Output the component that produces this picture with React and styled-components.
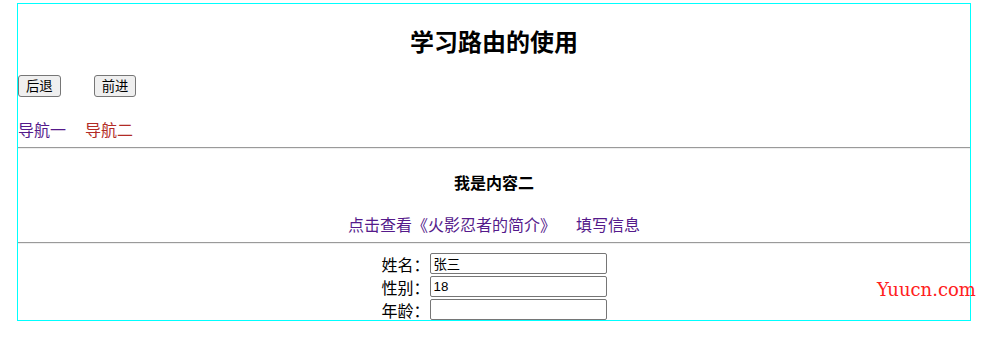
import React from "react";
import styled, { createGlobalStyle } from "styled-components";

const Global = createGlobalStyle`
  html, body { margin: 0; padding: 0; background: #fff; }
  body { font-family: "Noto Sans CJK SC", "Liberation Sans", sans-serif; color: #000; }
`;

const Page = styled.div`
  position: relative;
  width: 988px;
  height: 347px;
  padding: 3px 0 0 17px;
  box-sizing: border-box;
`;

const Frame = styled.div`
  width: 954px;
  height: 318px;
  box-sizing: border-box;
  border: 1px solid #00ffff;
  display: flex;
  flex-direction: column;
`;

const Title = styled.h2`
  margin: 25px 0 0;
  font-size: 24px;
  line-height: 24px;
  font-weight: 700;
  text-align: center;
`;

const ButtonRow = styled.div`
  display: flex;
  gap: 33px;
  margin-top: 22px;
`;

const Btn = styled.button`
  height: 22px;
  padding: 0 7px;
  font-family: "Noto Sans CJK SC", sans-serif;
  font-size: 13.33px;
  line-height: 18px;
  color: #000;
  background: #efefef;
  border: 1px solid #767676;
  border-radius: 3px;
`;

const NavRow = styled.div`
  display: flex;
  gap: 19px;
  margin-top: 24px;
`;

const Link = styled.a`
  font-size: 16px;
  line-height: 16px;
  color: ${(p) => (p.$active ? "#b22b26" : "#551a8b")};
  text-decoration: none;
  cursor: pointer;
`;

const Rule = styled.hr`
  width: 100%;
  margin: ${(p) => p.$top}px 0 0;
  height: 0;
  border: 0;
  border-top: 1px solid #9a9a9a;
  border-bottom: 1px solid #eeeeee;
`;

const SubTitle = styled.h4`
  margin: 25px 0 0;
  font-size: 16px;
  line-height: 16px;
  font-weight: 700;
  text-align: center;
`;

const LinkRow = styled.div`
  display: flex;
  justify-content: center;
  gap: 20px;
  margin-top: 26px;
`;

const Form = styled.div`
  margin-top: 8px;
  display: flex;
  flex-direction: column;
`;

const Row = styled.div`
  height: 23px;
  display: flex;
  justify-content: center;
  align-items: center;
`;

const Label = styled.label`
  width: 48px;
  font-size: 16px;
  line-height: 16px;
`;

const Input = styled.input`
  width: 177px;
  height: 21px;
  box-sizing: border-box;
  padding: 1px 3px;
  border: 1px solid #767676;
  border-radius: 2px;
  font-family: "Liberation Sans", "Noto Sans CJK SC", sans-serif;
  font-size: 13.33px;
  color: #000;
  outline: none;
`;

const Watermark = styled.div`
  position: absolute;
  left: 877px;
  top: 279px;
  font-family: "DejaVu Serif", serif;
  font-size: 18px;
  line-height: 22px;
  color: #ff2020;
`;

export default function App() {
  return (
    <Page>
      <Global />
      <Frame>
        <Title>学习路由的使用</Title>
        <ButtonRow>
          <Btn>后退</Btn>
          <Btn>前进</Btn>
        </ButtonRow>
        <NavRow>
          <Link>导航一</Link>
          <Link $active>导航二</Link>
        </NavRow>
        <Rule $top={10} />
        <SubTitle>我是内容二</SubTitle>
        <LinkRow>
          <Link>点击查看《火影忍者的简介》</Link>
          <Link>填写信息</Link>
        </LinkRow>
        <Rule $top={10} />
        <Form>
          <Row>
            <Label>姓名：</Label>
            <Input defaultValue="张三" />
          </Row>
          <Row>
            <Label>性别：</Label>
            <Input defaultValue="18" />
          </Row>
          <Row>
            <Label>年龄：</Label>
            <Input defaultValue="" />
          </Row>
        </Form>
      </Frame>
      <Watermark>Yuucn.com</Watermark>
    </Page>
  );
}
